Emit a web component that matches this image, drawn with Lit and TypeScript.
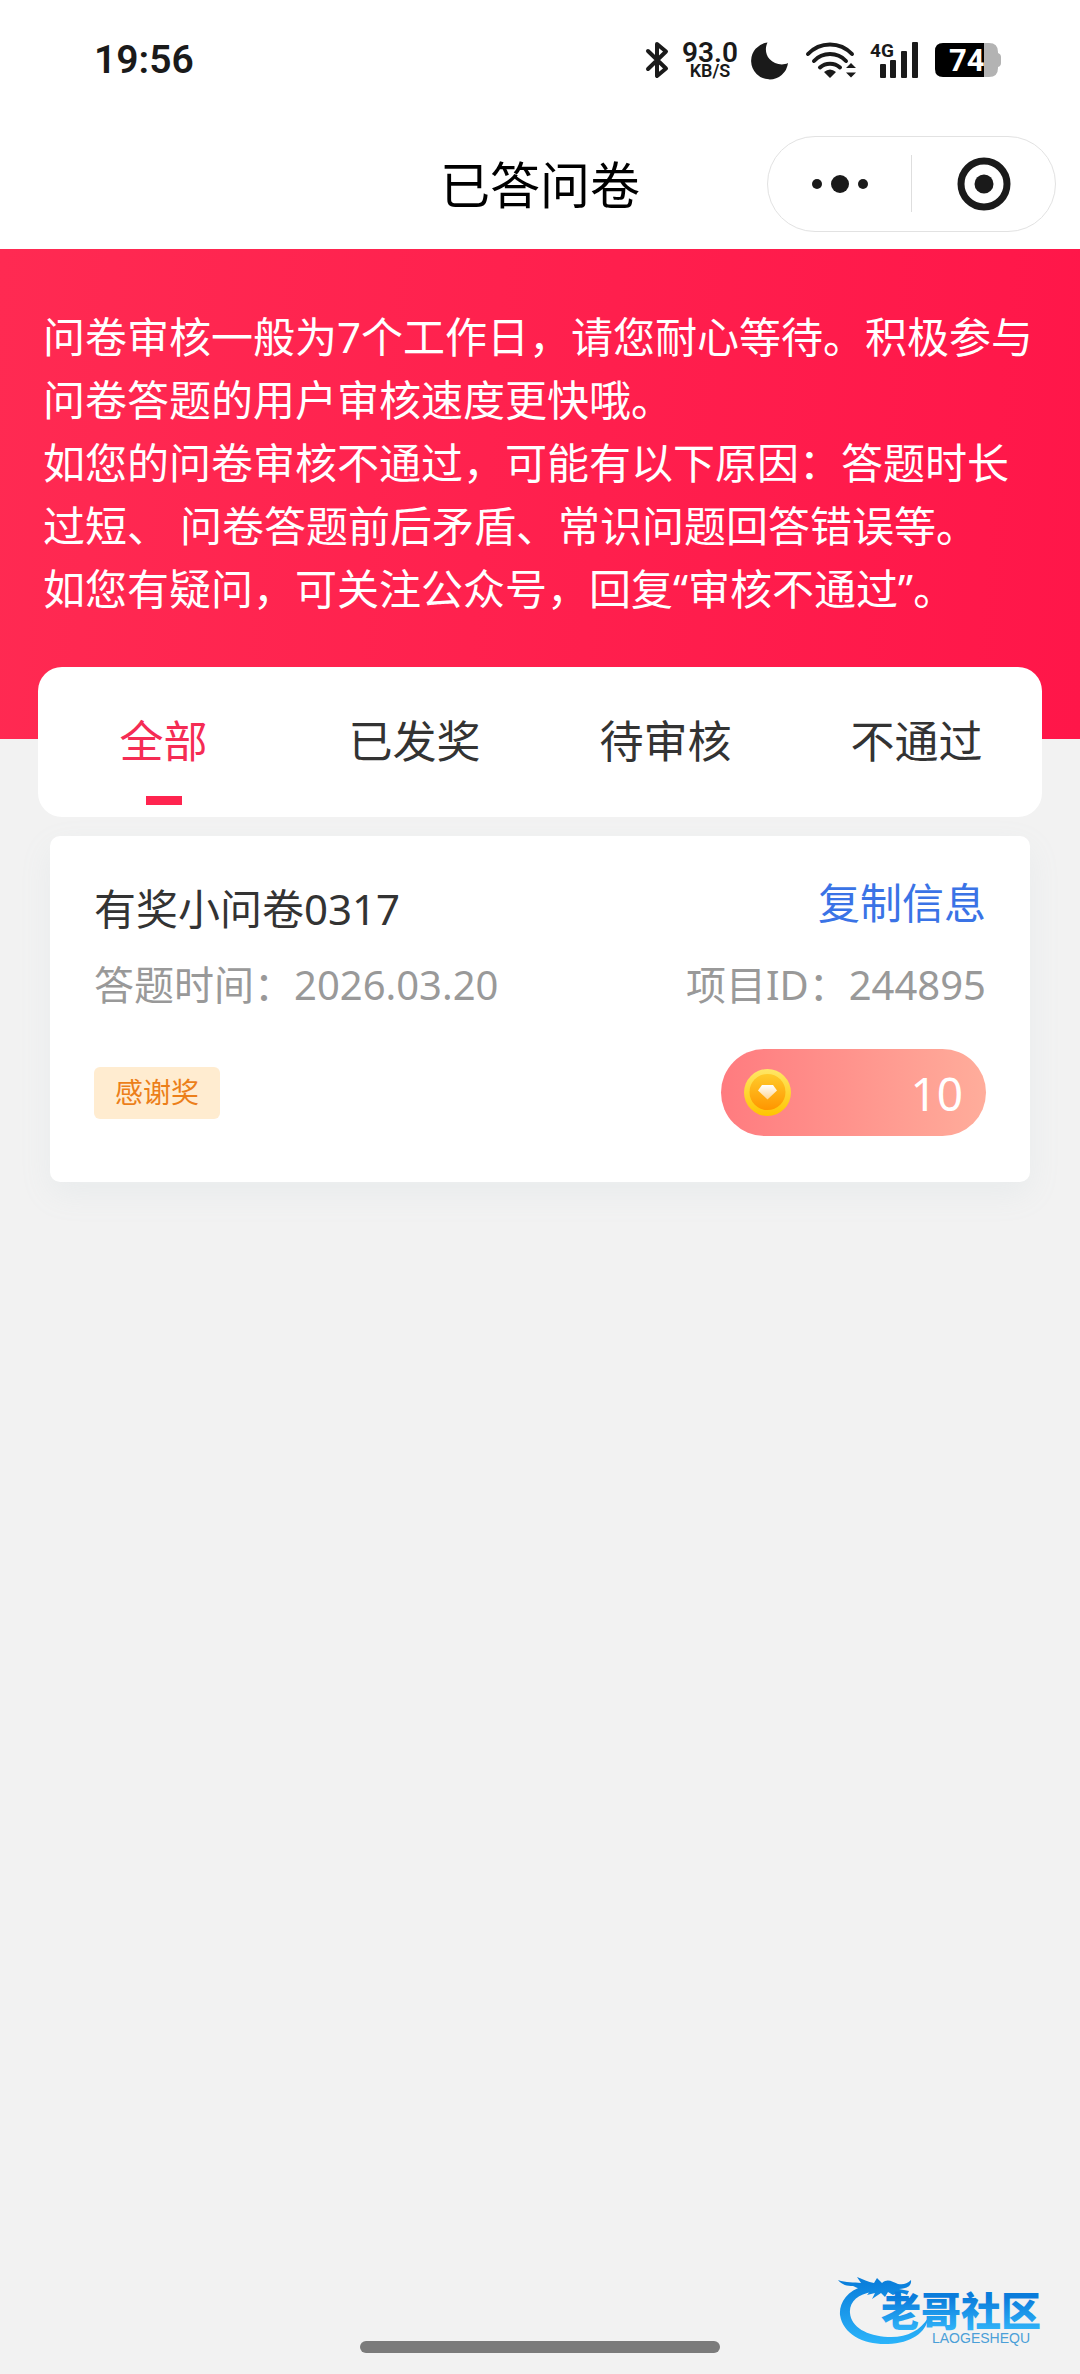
import { LitElement, html, css, svg } from "lit";
import { customElement, property, state } from "lit/decorators.js";
import { classMap } from "lit/directives/class-map.js";

interface Answer {
  title: string;
  date: string;
  projectId: string;
  award: string;
  coins: number;
}

const TABS = ["全部", "已发奖", "待审核", "不通过"];

const NOTICE = [
  "问卷审核一般为7个工作日，请您耐心等待。积极参与问卷答题的用户审核速度更快哦。",
  "如您的问卷审核不通过，可能有以下原因：答题时长过短、 问卷答题前后矛盾、常识问题回答错误等。",
  "如您有疑问，可关注公众号，回复“审核不通过”。",
];

const ANSWERS: Answer[] = [
  { title: "有奖小问卷0317", date: "2026.03.20", projectId: "244895", award: "感谢奖", coins: 10 },
];

@customElement("status-bar")
class StatusBar extends LitElement {
  static styles = css`
    :host {
      display: flex;
      justify-content: space-between;
      align-items: center;
      height: 120px;
      padding: 0 79px 0 94px;
      color: #1a1a1a;
      font-family: Roboto, "Liberation Sans", sans-serif;
      font-weight: 700;
    }
    .time {
      font-size: 39px;
      line-height: 48px;
      font-weight: 600;
    }
    .icons {
      display: flex;
      align-items: center;
      gap: 13px;
    }
    svg {
      display: block;
      overflow: visible;
    }
    .speed {
      width: 56px;
      display: flex;
      flex-direction: column;
      align-items: center;
      font-weight: 600;
      white-space: nowrap;
    }
    .rate {
      font-size: 28px;
      line-height: 21px;
    }
    .unit {
      font-size: 18px;
      line-height: 16px;
    }
  `;

  render() {
    return html`
      <span class="time">19:56</span>
      <div class="icons">
        <svg width="24" height="36" viewBox="0 0 24 36" fill="none" stroke="currentColor" stroke-width="4" stroke-linejoin="round" stroke-linecap="round">
          <path d="M3 9 21 26.5 12 34V2l9 7.5L3 27" />
        </svg>
        <div class="speed"><span class="rate">93.0</span><span class="unit">KB/S</span></div>
        <svg width="42" height="37" viewBox="0 0 42 37" fill="currentColor">
          <path d="M16.5.5A18.5 18.5 0 1 0 37 21C31 24 23 22 18.500 17 14.500 12.500 13.800 6 16.500.5Z" />
        </svg>
        <svg width="51" height="36" viewBox="0 0 51 36" fill="none" stroke="currentColor" stroke-width="4" stroke-linecap="round">
          <path d="M2 12A30 30 0 0 1 46 12M8 19A22 22 0 0 1 40 19M14 25.500A15 15 0 0 1 34 25.500" />
          <path d="M18 30Q24 25 30 30L24 36Z M40 26 45 21 50 26Z M40 30.500H50L45 35.500Z" fill="currentColor" stroke="none" />
        </svg>
        <svg width="52" height="36" viewBox="0 0 52 36" fill="currentColor">
          <text x="0" y="15" font-size="19">4G</text>
          <rect x="10" y="22" width="6" height="14" rx="1" />
          <rect x="20" y="18" width="6" height="18" rx="1" />
          <rect x="31" y="9" width="6" height="27" rx="1" />
          <rect x="42" y="0" width="6" height="36" rx="1" />
        </svg>
        <svg width="66" height="34" viewBox="0 0 66 34">
          <path d="M49 0H54Q63 0 63 9V10Q66 11 66 14V20Q66 23 63 24V25Q63 34 54 34H49Z" fill="#b3b3b3" />
          <path d="M8 0H49V34H8Q0 34 0 26V8Q0 0 8 0Z" fill="#000" />
          <text x="14" y="28" font-size="31" fill="#fff">74</text>
        </svg>
      </div>
    `;
  }
}

@customElement("nav-header")
class NavHeader extends LitElement {
  @property() heading = "";

  static styles = css`
    :host {
      display: grid;
      grid-template-columns: 1fr auto 1fr;
      align-items: center;
      height: 129px;
      padding: 0 24px 2px;
      box-sizing: border-box;
    }
    h1 {
      grid-column: 2;
      margin: 0;
      padding-top: 2px;
      font-size: 50px;
      line-height: 64px;
      font-weight: 400;
      color: #000;
    }
    .capsule {
      justify-self: end;
      display: flex;
      align-items: center;
      width: 289px;
      height: 96px;
      box-sizing: border-box;
      border: 1px solid #e2e2e2;
      border-radius: 48px;
    }
    button {
      flex: 1;
      display: flex;
      justify-content: center;
      align-items: center;
      height: 100%;
      padding: 0;
      border: 0;
      background: none;
      color: #1a1a1a;
    }
    .rule {
      width: 1px;
      height: 57px;
      background: #dedede;
    }
  `;

  render() {
    return html`
      <h1>${this.heading}</h1>
      <div class="capsule">
        <button aria-label="更多">
          <svg width="58" height="20" viewBox="0 0 58 20" fill="currentColor">
            <circle cx="6" cy="10" r="5" /><circle cx="29" cy="10" r="9" /><circle cx="52" cy="10" r="5" />
          </svg>
        </button>
        <span class="rule"></span>
        <button aria-label="关闭">
          <svg width="54" height="54" viewBox="0 0 54 54" fill="currentColor">
            <circle cx="27" cy="27" r="23" fill="none" stroke="currentColor" stroke-width="7" />
            <circle cx="27" cy="27" r="9.500" />
          </svg>
        </button>
      </div>
    `;
  }
}

@customElement("answer-card")
class AnswerCard extends LitElement {
  @property({ attribute: false }) answer!: Answer;

  static styles = css`
    :host {
      display: block;
      padding: 36px 44px 46px;
      background: #fff;
      border-radius: 10px;
      box-shadow: 0 12px 32px rgba(160, 185, 200, 0.1);
    }
    .row {
      display: flex;
      justify-content: space-between;
      align-items: flex-start;
    }
    h2 {
      margin: 0;
      font-size: 42px;
      line-height: 74px;
      font-weight: 400;
      color: #333;
    }
    .copy {
      padding: 0;
      border: 0;
      background: none;
      font: inherit;
      font-size: 42px;
      line-height: 62px;
      color: #3a73e6;
    }
    .meta {
      margin-top: 8px;
      font-size: 40px;
      line-height: 62px;
      color: #999;
    }
    .reward {
      align-items: center;
      margin-top: 33px;
    }
    .tag {
      padding: 0 21px 2px;
      font-size: 28px;
      line-height: 50px;
      color: #ec7f1a;
      background: #ffecd0;
      border-radius: 6px;
    }
    .coins {
      display: flex;
      justify-content: space-between;
      align-items: center;
      width: 265px;
      height: 87px;
      padding: 0 23px;
      box-sizing: border-box;
      border-radius: 44px;
      background: linear-gradient(90deg, #ff7b7f, #ffad9b);
      color: #fff;
      font-size: 46px;
      line-height: 60px;
    }
  `;

  render() {
    const a = this.answer;
    return html`
      <div class="row">
        <h2>${a.title}</h2>
        <button class="copy">复制信息</button>
      </div>
      <div class="row meta">
        <span>答题时间：${a.date}</span>
        <span>项目ID：${a.projectId}</span>
      </div>
      <div class="row reward">
        <span class="tag">${a.award}</span>
        <div class="coins">
          <svg width="47" height="47" viewBox="0 0 47 47">
            <defs>
              <linearGradient id="rim" x2="0" y2="1"><stop stop-color="#ffe766" /><stop offset="1" stop-color="#ffc400" /></linearGradient>
              <linearGradient id="face" x2="0" y2="1"><stop stop-color="#ffcb2b" /><stop offset="1" stop-color="#ff9500" /></linearGradient>
              <linearGradient id="gem" x2="0" y2="1"><stop stop-color="#fff" /><stop offset="1" stop-color="#ffd591" /></linearGradient>
            </defs>
            <circle cx="23.500" cy="23.500" r="23.500" fill="url(#rim)" />
            <circle cx="23.500" cy="23" r="18" fill="url(#face)" />
            <path d="M18 16H29L33 21.500 23.500 30.500 14 21.500Z" fill="url(#gem)" />
          </svg>
          <span>${a.coins}</span>
        </div>
      </div>
    `;
  }
}

@customElement("community-mark")
class CommunityMark extends LitElement {
  static styles = css`
    :host {
      display: block;
    }
    svg {
      display: block;
      overflow: visible;
    }
    .name {
      font-family: "Noto Sans CJK SC", sans-serif;
      font-weight: 900;
      font-size: 40px;
    }
    .latin {
      font-family: "Liberation Sans", sans-serif;
      font-size: 14px;
    }
  `;

  render() {
    return html`
      <svg width="230" height="76" viewBox="0 0 230 76" role="img" aria-label="老哥社区">
        <defs>
          <linearGradient id="sky" gradientUnits="userSpaceOnUse" x1="0" y1="10" x2="0" y2="70">
            <stop stop-color="#0b80dc" /><stop offset="1" stop-color="#2bb4fa" />
          </linearGradient>
          <linearGradient id="ink" x2="0" y2="1">
            <stop offset=".3" stop-color="#0a7cdb" /><stop offset=".85" stop-color="#2fb2f8" />
          </linearGradient>
        </defs>
        ${this.dragon()}
        <text class="name" x="43" y="52" fill="url(#ink)">老哥社区</text>
        <text class="latin" x="94" y="69" fill="#4a9fd8">LAOGESHEQU</text>
      </svg>
    `;
  }

  private dragon() {
    return svg`
      <g fill="url(#sky)">
        <path d="M30 11C10 15 1 28 2 41 5 61 27 71 50 70 73 69 88 59 90 44 82 57 68 64 50 63 29 62 13 53 12 39 11 28 20 20 34 18Z" />
        <path d="M0 6C8 9 16 8 23 9L19 3C25 5 30 8 36 9L39 4 44 9C50 4 54 8 60 10 65 11 69 10 73 6 74 13 66 15 61 15L71 17 69 21C63 18 59 19 55 21L50 18 47 23 43 19 34 25 37 19 29 21 33 16C24 17 20 14 15 12 9 12 4 11 0 6Z" />
      </g>
    `;
  }
}

@customElement("app-root")
class AppRoot extends LitElement {
  @state() private active = 0;

  static styles = css`
    :host {
      display: flex;
      flex-direction: column;
      position: relative;
      min-height: 100vh;
      background: #f2f2f2;
      font-family: "Noto Sans", "Noto Sans CJK SC", sans-serif;
    }
    .top {
      background: #fff;
    }
    .banner {
      padding: 56px 43px 119px;
      background: linear-gradient(95deg, #ff2a52, #ff1649);
      color: #fff;
      font-size: 42px;
      line-height: 63px;
    }
    .banner p {
      margin: 0;
    }
    .tabs {
      display: grid;
      grid-template-columns: repeat(4, 1fr);
      height: 150px;
      margin: -72px 38px 0;
      background: #fff;
      border-radius: 24px;
    }
    .tab {
      display: flex;
      flex-direction: column;
      justify-content: space-between;
      align-items: center;
      padding: 42px 0 12px;
      border: 0;
      background: none;
      font: inherit;
      font-size: 44px;
      line-height: 64px;
      color: #333;
    }
    .tab.on {
      color: #f52c54;
    }
    .bar {
      width: 36px;
      height: 9px;
    }
    .on .bar {
      background: #ff244f;
    }
    .list {
      display: flex;
      flex-direction: column;
      gap: 19px;
      padding: 19px 50px;
    }
    .home {
      width: 33.33%;
      height: 12px;
      margin: auto auto 21px;
      border-radius: 6px;
      background: #7b7b7b;
    }
    .mark {
      position: absolute;
      right: 12px;
      bottom: 24px;
    }
  `;

  render() {
    const shown = this.active === 0 || this.active === 1 ? ANSWERS : [];
    return html`
      <header class="top">
        <status-bar></status-bar>
        <nav-header heading="已答问卷"></nav-header>
      </header>
      <section class="banner">${NOTICE.map((line) => html`<p>${line}</p>`)}</section>
      <nav class="tabs">
        ${TABS.map(
          (name, i) => html`
            <button class=${classMap({ tab: true, on: i === this.active })} @click=${() => (this.active = i)}>
              ${name}<span class="bar"></span>
            </button>
          `
        )}
      </nav>
      <main class="list">${shown.map((a) => html`<answer-card .answer=${a}></answer-card>`)}</main>
      <div class="home"></div>
      <community-mark class="mark"></community-mark>
    `;
  }
}
